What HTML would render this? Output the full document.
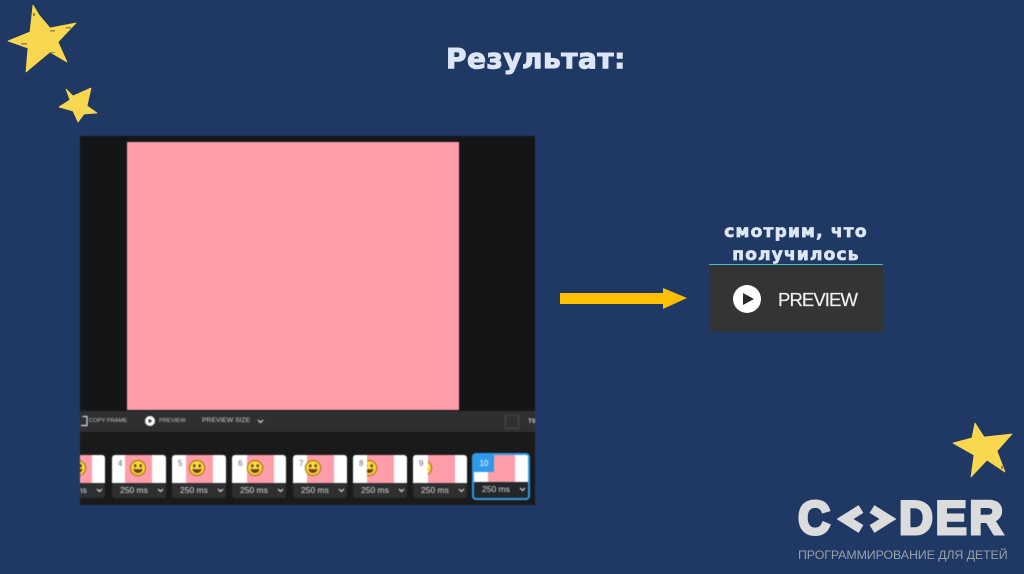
<!DOCTYPE html>
<html lang="ru"><head><meta charset="utf-8"><title>Результат</title>
<style>
html,body{margin:0;padding:0}
body{width:1024px;height:574px;background:#1f3864;position:relative;overflow:hidden;font-family:"Liberation Sans",sans-serif}
.a{position:absolute;white-space:nowrap}
.t{font-family:"DejaVu Sans",sans-serif;font-weight:bold;color:#dce6f5}
#ed{left:80px;top:136px;width:455px;height:369px;background:#131516;overflow:hidden;filter:blur(.5px)}
.card{position:absolute;top:319px;width:54px;height:43px;border-radius:3px;overflow:hidden;background:#2e2f31}
.img{position:absolute;left:0;top:0;width:100%;height:28px;background:#fff;overflow:hidden}
.p{position:absolute;top:0;height:28px;width:27px;background:#ff9dab}
.n{position:absolute;left:6px;top:4px;font-size:8px;color:#666}
.ms{position:absolute;left:8px;top:30px;font-size:8.5px;color:#ddd}
.cv{position:absolute;left:45px;top:33px;width:7px;height:5px}
.sm{position:absolute;top:4px;width:18px;height:18px}
.cov{position:absolute;left:0;top:0;height:28px;background:#fff}
.lg{font-weight:bold;color:#dcdcdc;-webkit-text-stroke:3px #dcdcdc;font-size:47px;line-height:54px}
</style></head>
<body>
<svg class="a" style="left:0;top:0" width="1024" height="574" viewBox="0 0 1024 574">
<g fill="#f9d84f" stroke="#f9d84f" stroke-width=".8" stroke-linejoin="round">
<polygon points="33,5 39,15 50,28 76,23 58,42 67,62 50,52 26,72 28,48 8,41 30,32"/>
<polygon points="66,89 73,96 91,88 87,106 97,113 84,114 78,122 73,111 59,107 70,100"/>
<polygon points="975,423 984,437 1012,434 997,451 1005,472 987,460 971,477 974,455 953,443 972,438"/>
</g>
<g fill="#6a6540" opacity=".7">
<rect x="33" y="13" width="2" height="3"/>
<rect x="50" y="30" width="5" height="1.5"/>
<rect x="66" y="27" width="5" height="1.5"/>
<rect x="21" y="43" width="6" height="1.5"/>
<rect x="50" y="52" width="5" height="1"/>
<rect x="1001" y="466" width="2" height="3"/>
</g>
<polygon points="560,293 663,293 663,288 687,298 663,309 663,304 560,304" fill="#ffc000"/>
</svg>

<div class="a t" style="left:446px;top:41px;font-size:28px;line-height:36px;-webkit-text-stroke:1px #dce6f5;letter-spacing:.5px">Результат:</div>

<div class="a" id="ed">
  <div class="a" style="left:47px;top:6px;width:332px;height:268px;background:#ff9dab"></div>
  <div class="a" style="left:0;top:275px;width:455px;height:21px;background:#2e2f31"></div>
  <div class="a" style="left:0;top:296px;width:455px;height:73px;background:#1a1a1b"></div>
  <svg class="a" style="left:0;top:279px" width="10" height="13" viewBox="0 0 10 13"><path d="M2 1.5V2M3 1.5h4v9H1" fill="none" stroke="#ddd" stroke-width="1.2"/></svg>
  <div class="a" style="left:9px;top:281px;font-size:5.8px;line-height:9px;color:#c8c8c8">COPY FRAME</div>
  <svg class="a" style="left:65px;top:280px" width="10" height="10" viewBox="0 0 10 10"><circle cx="5" cy="5" r="5" fill="#fff"/><path d="M3.7 2.8L7.2 5L3.7 7.2Z" fill="#222"/></svg>
  <div class="a" style="left:79px;top:281px;font-size:5.8px;line-height:9px;color:#c8c8c8">PREVIEW</div>
  <div class="a" style="left:122px;top:280px;font-size:6.8px;line-height:10px;color:#d0d0d0">PREVIEW SIZE</div>
  <svg class="a" style="left:177px;top:283px" width="7" height="5" viewBox="0 0 7 5"><path d="M1 1L3.5 3.5L6 1" fill="none" stroke="#ddd" stroke-width="1.2"/></svg>
  <div class="a" style="left:425px;top:279px;width:12px;height:12px;border:1px solid #4c4d4f;border-radius:1px"></div>
  <div class="a" style="left:448px;top:281px;font-size:6.5px;line-height:9px;color:#c8c8c8;font-weight:bold">TIL</div>

  <svg width="0" height="0" style="position:absolute"><defs>
    <g id="smile"><circle cx="9" cy="9" r="7.6" fill="#fdd835" stroke="#a5700c" stroke-width="1.1"/><ellipse cx="6.3" cy="6.8" rx="1.1" ry="1.6" fill="#333"/><ellipse cx="11.7" cy="6.8" rx="1.1" ry="1.6" fill="#333"/><path d="M4.3 9.8Q9 11 13.7 9.8Q12.8 14 9 14Q5.2 14 4.3 9.8Z" fill="#6d3a12"/></g>
    <g id="cv"><path d="M1 1L3.5 3.5L6 1" fill="none" stroke="#ddd" stroke-width="1.2"/></g>
  </defs></svg>

  <!-- frame 3 -->
  <div class="card" style="left:-29px;"><div class="img"><div class="p" style="left:14px"></div><svg class="sm" style="left:18px" viewBox="0 0 18 18"><use href="#smile"/></svg></div><div class="ms">250 ms</div><svg class="cv" viewBox="0 0 7 5"><use href="#cv"/></svg></div>
  <!-- frame 4 -->
  <div class="card" style="left:32px"><div class="img"><div class="p" style="left:13px"></div><div class="n">4</div><svg class="sm" style="left:17px" viewBox="0 0 18 18"><use href="#smile"/></svg></div><div class="ms">250 ms</div><svg class="cv" viewBox="0 0 7 5"><use href="#cv"/></svg></div>
  <!-- frame 5 -->
  <div class="card" style="left:92px"><div class="img"><div class="p" style="left:14px"></div><div class="n">5</div><svg class="sm" style="left:16px" viewBox="0 0 18 18"><use href="#smile"/></svg></div><div class="ms">250 ms</div><svg class="cv" viewBox="0 0 7 5"><use href="#cv"/></svg></div>
  <!-- frame 6 -->
  <div class="card" style="left:152px"><div class="img"><div class="p" style="left:15px"></div><div class="n">6</div><svg class="sm" style="left:14px" viewBox="0 0 18 18"><use href="#smile"/></svg></div><div class="ms">250 ms</div><svg class="cv" viewBox="0 0 7 5"><use href="#cv"/></svg></div>
  <!-- frame 7 -->
  <div class="card" style="left:213px"><div class="img"><div class="p" style="left:14px"></div><svg class="sm" style="left:11px" viewBox="0 0 18 18"><use href="#smile"/></svg><div class="n">7</div></div><div class="ms">250 ms</div><svg class="cv" viewBox="0 0 7 5"><use href="#cv"/></svg></div>
  <!-- frame 8 -->
  <div class="card" style="left:273px"><div class="img"><div class="p" style="left:14px"></div><svg class="sm" style="left:7px" viewBox="0 0 18 18"><use href="#smile"/></svg><div class="cov" style="width:14px"></div><div class="n">8</div></div><div class="ms">250 ms</div><svg class="cv" viewBox="0 0 7 5"><use href="#cv"/></svg></div>
  <!-- frame 9 -->
  <div class="card" style="left:333px"><div class="img"><div class="p" style="left:15px"></div><svg class="sm" style="left:2px" viewBox="0 0 18 18"><use href="#smile"/></svg><div class="cov" style="width:15px"></div><div class="n">9</div></div><div class="ms">250 ms</div><svg class="cv" viewBox="0 0 7 5"><use href="#cv"/></svg></div>
  <!-- frame 10 -->
  <div class="card" style="left:392px;top:317px;width:58px;height:47px;box-sizing:border-box;border:2px solid #2f9ae8;border-radius:4px;background:#23262b"><div class="img" style="height:27px"><div class="p" style="left:14px;height:27px"></div><div style="position:absolute;left:0;top:0;width:20px;height:17px;background:#2f9ae8;color:#fff;font-size:8px;line-height:17px;text-align:center">10</div></div><div class="ms" style="top:29px">250 ms</div><svg class="cv" style="top:32px;left:45px" viewBox="0 0 7 5"><use href="#cv"/></svg></div>
</div>

<div class="a t" style="left:696px;top:221px;width:200px;text-align:center;font-size:17px;line-height:23px;letter-spacing:1.2px;-webkit-text-stroke:.7px #dce6f5;white-space:normal">смотрим, что<br>получилось</div>
<div class="a" style="left:709px;top:264px;width:174px;height:1px;background:#3fc0c8"></div>
<div class="a" style="left:709px;top:265px;width:174px;height:67px;background:#333435"></div>
<svg class="a" style="left:733px;top:285px" width="28" height="28" viewBox="0 0 28 28"><circle cx="14" cy="14" r="14" fill="#fff"/><path d="M10 8L21 14L10 20Z" fill="#2b2b2b"/></svg>
<div class="a" style="left:778px;top:288px;font-size:18.5px;line-height:24px;color:#f0f0f0;letter-spacing:-.9px;-webkit-text-stroke:.2px #f0f0f0">PREVIEW</div>

<div class="a lg" style="left:798px;top:491px;transform:scaleX(.95);transform-origin:left">C</div>
<svg class="a" style="left:836px;top:498px" width="62" height="38" viewBox="0 0 62 38"><path d="M25 11L9 21L25 31M36 11L52 21L36 31" fill="none" stroke="#dcdcdc" stroke-width="9"/></svg>
<div class="a lg" style="left:899px;top:491px;letter-spacing:2.5px">DER</div>
<div class="a" style="left:798px;top:547px;font-size:12.4px;line-height:16px;color:#98a0ac;letter-spacing:-.1px">ПРОГРАММИРОВАНИЕ ДЛЯ ДЕТЕЙ</div>
</body></html>
